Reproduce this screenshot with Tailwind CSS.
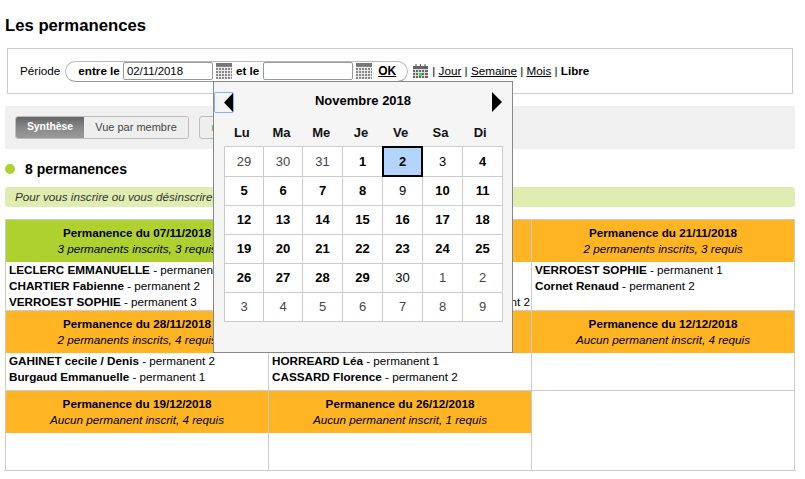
<!DOCTYPE html>
<html lang="fr">
<head>
<meta charset="utf-8">
<script src="https://cdn.jsdelivr.net/npm/@tailwindcss/browser@4"></script>
<title>Les permanences</title>
</head>
<body class="bg-white text-black font-['Liberation_Sans',Arial,sans-serif] text-[11.7px] leading-[16px] overflow-hidden">
<div class="relative h-[479px] w-[805px] pl-[5px] pr-[10px]">
  <h1 class="pt-[17px] h-[48px] text-[16.7px] leading-[18px] font-bold">Les permanences</h1>

  <div class="mx-[2px] h-[46px] w-[786px] border border-[#ccc] flex items-center pl-[12px]">
    <span class="mr-[5px]">Période</span>
    <div class="h-[21px] w-[343px] rounded-full border border-[#bbb] border-b-[#999] flex items-center pl-[12px] font-bold">
      <span class="mr-[3px]">entre le</span>
      <span class="w-[90px] h-[18px] border border-[#999] rounded-[2px] bg-white font-normal text-[11.4px] px-[3px] leading-[16px]">02/11/2018</span>
      <svg class="mx-[3px]" width="16" height="16" viewBox="0 0 16 16"><rect width="16" height="16" fill="#888"/><rect y="0" width="16" height="3" fill="#777"/><path d="M0 4.5H16M0 7.5H16M0 10.5H16M0 13.5H16M2.5 4V16M5.5 4V16M8.5 4V16M11.5 4V16M14.5 4V16" stroke="#e8e8e8" stroke-width="1"/></svg>
      <span class="ml-[1px] mr-[4px]">et le</span>
      <span class="w-[90px] h-[18px] border border-[#999] rounded-[2px] bg-white"></span>
      <svg class="mx-[3px]" width="16" height="16" viewBox="0 0 16 16"><rect width="16" height="16" fill="#888"/><rect y="0" width="16" height="3" fill="#777"/><path d="M0 4.5H16M0 7.5H16M0 10.5H16M0 13.5H16M2.5 4V16M5.5 4V16M8.5 4V16M11.5 4V16M14.5 4V16" stroke="#e8e8e8" stroke-width="1"/></svg>
      <a class="underline ml-[3px] text-[12px]">OK</a>
    </div>
    <svg class="ml-[5px] mr-[4px]" width="15" height="14" viewBox="0 0 15 14"><rect y="2" width="15" height="12" fill="#666"/><path d="M3 0V3M7.500 0V3M12 0V3" stroke="#555"/><path d="M0 5.500H15M0 8.500H15M0 11.500H15M2.500 5V14M5.500 5V14M8.500 5V14M11.500 5V14" stroke="#ddd"/><rect x="6" y="9" width="3" height="3" fill="#3ddc4a"/></svg>
    <span>| <a class="underline">Jour</a> | <a class="underline">Semaine</a> | <a class="underline">Mois</a> | <b>Libre</b></span>
  </div>

  <div class="mt-[12px] h-[43px] bg-[#f0f0f0] flex items-center pl-[10px]">
    <div class="flex h-[23px] w-[174px] rounded-[3px] border border-[#bbb] overflow-hidden text-[11px] leading-[20px]">
      <span class="w-[68px] bg-gradient-to-b from-[#666] via-[#888] to-[#999] text-white font-bold text-[10.4px] text-center">Synthèse</span>
      <span class="flex-1 bg-[#eee] text-[#444] text-center">Vue par membre</span>
    </div>
    <div class="ml-[10px] h-[23px] w-[120px] rounded-[3px] border border-[#bbb] bg-[#eee] pl-[12px] pt-[8px]"><div class="w-[2px] h-[6px] bg-[#c9975a]"></div></div>
  </div>

  <div class="h-[38px] flex items-center">
    <span class="w-[10px] h-[10px] rounded-full bg-[#afd130] mr-[10px] mt-[2px]"></span>
    <span class="text-[14px] font-bold mt-[2px]">8 permanences</span>
  </div>

  <div class="h-[20px] rounded-[3px] bg-[#dfedb0] pl-[10px] italic text-[#333] leading-[20px]">Pour vous inscrire ou vous désinscrire, cliquez sur la permanence de votre choix</div>

  <div class="mt-[12px] w-[790px] h-[252px] border border-[#ccc] grid grid-cols-[263px_263px_1fr] grid-rows-[91px_80px_1fr]">
    <div class="border-r border-b border-[#ccc]">
      <div class="h-[42px] bg-[#afd130] text-center pt-[5px]"><b>Permanence du 07/11/2018</b><br><i>3 permanents inscrits, 3 requis</i></div>
      <div class="pl-[3px]"><b>LECLERC EMMANUELLE</b> - permanent 1<br><b>CHARTIER Fabienne</b> - permanent 2<br><b>VERROEST SOPHIE</b> - permanent 3</div>
    </div>
    <div class="border-r border-b border-[#ccc]">
      <div class="h-[42px] bg-[#ffb423] text-center pt-[5px]"><b>Permanence du 14/11/2018</b><br><i>3 permanents inscrits, 3 requis</i></div>
      <div class="pr-[1px] pt-[32px] text-right">permanent 2</div>
    </div>
    <div class="border-b border-[#ccc]">
      <div class="h-[42px] bg-[#ffb423] text-center pt-[5px]"><b>Permanence du 21/11/2018</b><br><i>2 permanents inscrits, 3 requis</i></div>
      <div class="pl-[3px]"><b>VERROEST SOPHIE</b> - permanent 1<br><b>Cornet Renaud</b> - permanent 2</div>
    </div>
    <div class="border-r border-b border-[#ccc]">
      <div class="h-[42px] bg-[#ffb423] text-center pt-[5px]"><b>Permanence du 28/11/2018</b><br><i>2 permanents inscrits, 4 requis</i></div>
      <div class="pl-[3px]"><b>GAHINET cecile / Denis</b> - permanent 2<br><b>Burgaud Emmanuelle</b> - permanent 1</div>
    </div>
    <div class="border-r border-b border-[#ccc]">
      <div class="h-[42px] bg-[#ffb423] text-center pt-[5px]"><b>Permanence du 05/12/2018</b><br><i>2 permanents inscrits, 4 requis</i></div>
      <div class="pl-[3px]"><b>HORREARD Léa</b> - permanent 1<br><b>CASSARD Florence</b> - permanent 2</div>
    </div>
    <div class="border-b border-[#ccc]">
      <div class="h-[42px] bg-[#ffb423] text-center pt-[5px]"><b>Permanence du 12/12/2018</b><br><i>Aucun permanent inscrit, 4 requis</i></div>
    </div>
    <div class="border-r border-[#ccc]">
      <div class="h-[42px] bg-[#ffb423] text-center pt-[5px]"><b>Permanence du 19/12/2018</b><br><i>Aucun permanent inscrit, 4 requis</i></div>
    </div>
    <div class="border-r border-[#ccc]">
      <div class="h-[42px] bg-[#ffb423] text-center pt-[5px]"><b>Permanence du 26/12/2018</b><br><i>Aucun permanent inscrit, 1 requis</i></div>
    </div>
    <div></div>
  </div>

  <!-- date picker popup -->
  <div class="absolute left-[213px] top-[81px] w-[300px] h-[272px] border border-[#888] bg-[#f5f5f5] text-[13px]">
    <div class="flex h-[40px] items-start justify-between">
      <span class="mt-[10px] w-[20px] h-[21px] border border-[#8ab0f5] rounded-[2px] flex justify-end items-center">
        <svg width="9" height="19" viewBox="0 0 9 19"><path d="M9 0V19L0 9.500Z" fill="#000"/></svg>
      </span>
      <span class="mt-[11px] font-bold leading-[16px]">Novembre 2018</span>
      <svg class="mt-[10px] mr-[10px]" width="10" height="20" viewBox="0 0 10 20"><path d="M0 0V20L10 10Z" fill="#000"/></svg>
    </div>
    <div class="ml-[8px] w-[278px] grid grid-cols-7 h-[24px] pb-[3px] font-bold items-center text-center text-[#111]">
      <span>Lu</span><span>Ma</span><span>Me</span><span>Je</span><span>Ve</span><span>Sa</span><span>Di</span>
    </div>
    <div class="ml-[10px] w-[279px] h-[176px] grid grid-cols-[39px_39px_40px_40px_40px_40px_1fr] grid-rows-[30px_29px_29px_29px_29px_1fr] border-l border-t border-[#ccc] bg-white text-center">
      <span class="border-r border-b border-[#ccc] flex items-center justify-center text-[#444]">29</span>
      <span class="border-r border-b border-[#ccc] flex items-center justify-center text-[#444]">30</span>
      <span class="border-r border-b border-[#ccc] flex items-center justify-center text-[#444]">31</span>
      <span class="border-r border-b border-[#ccc] flex items-center justify-center font-bold">1</span>
      <span class="border-2 border-black bg-[#b3d4fc] flex items-center justify-center font-bold -mt-px -ml-px">2</span>
      <span class="border-r border-b border-[#ccc] flex items-center justify-center">3</span>
      <span class="border-r border-b border-[#ccc] flex items-center justify-center font-bold">4</span>

      <span class="border-r border-b border-[#ccc] flex items-center justify-center font-bold">5</span>
      <span class="border-r border-b border-[#ccc] flex items-center justify-center font-bold">6</span>
      <span class="border-r border-b border-[#ccc] flex items-center justify-center font-bold">7</span>
      <span class="border-r border-b border-[#ccc] flex items-center justify-center font-bold">8</span>
      <span class="border-r border-b border-[#ccc] flex items-center justify-center">9</span>
      <span class="border-r border-b border-[#ccc] flex items-center justify-center font-bold">10</span>
      <span class="border-r border-b border-[#ccc] flex items-center justify-center font-bold">11</span>

      <span class="border-r border-b border-[#ccc] flex items-center justify-center font-bold">12</span>
      <span class="border-r border-b border-[#ccc] flex items-center justify-center font-bold">13</span>
      <span class="border-r border-b border-[#ccc] flex items-center justify-center font-bold">14</span>
      <span class="border-r border-b border-[#ccc] flex items-center justify-center font-bold">15</span>
      <span class="border-r border-b border-[#ccc] flex items-center justify-center font-bold">16</span>
      <span class="border-r border-b border-[#ccc] flex items-center justify-center font-bold">17</span>
      <span class="border-r border-b border-[#ccc] flex items-center justify-center font-bold">18</span>

      <span class="border-r border-b border-[#ccc] flex items-center justify-center font-bold">19</span>
      <span class="border-r border-b border-[#ccc] flex items-center justify-center font-bold">20</span>
      <span class="border-r border-b border-[#ccc] flex items-center justify-center font-bold">21</span>
      <span class="border-r border-b border-[#ccc] flex items-center justify-center font-bold">22</span>
      <span class="border-r border-b border-[#ccc] flex items-center justify-center font-bold">23</span>
      <span class="border-r border-b border-[#ccc] flex items-center justify-center font-bold">24</span>
      <span class="border-r border-b border-[#ccc] flex items-center justify-center font-bold">25</span>

      <span class="border-r border-b border-[#ccc] flex items-center justify-center font-bold">26</span>
      <span class="border-r border-b border-[#ccc] flex items-center justify-center font-bold">27</span>
      <span class="border-r border-b border-[#ccc] flex items-center justify-center font-bold">28</span>
      <span class="border-r border-b border-[#ccc] flex items-center justify-center font-bold">29</span>
      <span class="border-r border-b border-[#ccc] flex items-center justify-center">30</span>
      <span class="border-r border-b border-[#ccc] flex items-center justify-center text-[#444]">1</span>
      <span class="border-r border-b border-[#ccc] flex items-center justify-center text-[#444]">2</span>

      <span class="border-r border-b border-[#ccc] flex items-center justify-center text-[#444]">3</span>
      <span class="border-r border-b border-[#ccc] flex items-center justify-center text-[#444]">4</span>
      <span class="border-r border-b border-[#ccc] flex items-center justify-center text-[#444]">5</span>
      <span class="border-r border-b border-[#ccc] flex items-center justify-center text-[#444]">6</span>
      <span class="border-r border-b border-[#ccc] flex items-center justify-center text-[#444]">7</span>
      <span class="border-r border-b border-[#ccc] flex items-center justify-center text-[#444]">8</span>
      <span class="border-r border-b border-[#ccc] flex items-center justify-center text-[#444]">9</span>
    </div>
  </div>
</div>
</body>
</html>
